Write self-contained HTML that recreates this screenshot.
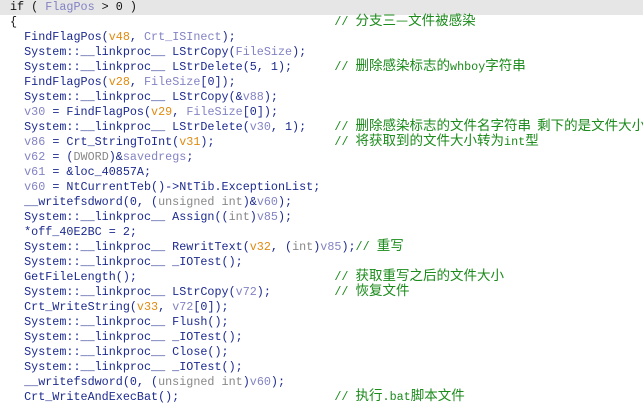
<!DOCTYPE html>
<html><head><meta charset="utf-8"><style>
html,body{margin:0;padding:0;background:#fff;width:643px;height:408px;overflow:hidden}
pre{margin:0;padding:0 0 0 10px;font-family:"Liberation Mono","Noto Sans CJK SC",monospace;font-size:11.75px;line-height:15px;color:#1c2a8e;white-space:pre}
.hl{background:#e6e6e6;display:block;margin-left:-10px;padding-left:10px;color:#111}
.v{color:#8383c4}.o{color:#e08a10}.g{color:#888}.c{color:#1a8a1a}
.z{font-family:"Noto Sans CJK SC",sans-serif;font-size:13.5px;line-height:0}
.k{color:#111}
</style></head><body><pre><span class="hl"><span class="k">if ( </span><span class="v">FlagPos</span><span class="k"> &gt; 0 )</span></span><span class="k">{</span>                                             <span class="c">// <span class="z">分支三—文件被感染</span></span>
  FindFlagPos(<span class="o">v48</span>, <span class="v">Crt_ISInect</span>);
  System::__linkproc__ LStrCopy(<span class="v">FileSize</span>);
  System::__linkproc__ LStrDelete(5, 1);      <span class="c">// <span class="z">删除感染标志的</span>whboy<span class="z">字符串</span></span>
  FindFlagPos(<span class="o">v28</span>, <span class="v">FileSize</span>[0]);
  System::__linkproc__ LStrCopy(&amp;<span class="v">v88</span>);
  <span class="v">v30</span> = FindFlagPos(<span class="o">v29</span>, <span class="v">FileSize</span>[0]);
  System::__linkproc__ LStrDelete(<span class="v">v30</span>, 1);    <span class="c">// <span class="z">删除感染标志的文件名字符串  剩下的是文件大小</span></span>
  <span class="v">v86</span> = Crt_StringToInt(<span class="o">v31</span>);                 <span class="c">// <span class="z">将获取到的文件大小转为</span>int<span class="z">型</span></span>
  <span class="v">v62</span> = (<span class="g">DWORD</span>)&amp;<span class="v">savedregs</span>;
  <span class="v">v61</span> = &amp;loc_40857A;
  <span class="v">v60</span> = NtCurrentTeb()-&gt;NtTib.ExceptionList;
  __writefsdword(0, (<span class="g">unsigned int</span>)&amp;<span class="v">v60</span>);
  System::__linkproc__ Assign((<span class="g">int</span>)<span class="v">v85</span>);
  *off_40E2BC = 2;
  System::__linkproc__ RewritText(<span class="o">v32</span>, (<span class="g">int</span>)<span class="v">v85</span>);<span class="c">// <span class="z">重写</span></span>
  System::__linkproc__ _IOTest();
  GetFileLength();                            <span class="c">// <span class="z">获取重写之后的文件大小</span></span>
  System::__linkproc__ LStrCopy(<span class="v">v72</span>);         <span class="c">// <span class="z">恢复文件</span></span>
  Crt_WriteString(<span class="o">v33</span>, <span class="v">v72</span>[0]);
  System::__linkproc__ Flush();
  System::__linkproc__ _IOTest();
  System::__linkproc__ Close();
  System::__linkproc__ _IOTest();
  __writefsdword(0, (<span class="g">unsigned int</span>)<span class="v">v60</span>);
  Crt_WriteAndExecBat();                      <span class="c">// <span class="z">执行</span>.bat<span class="z">脚本文件</span></span>
</pre></body></html>
